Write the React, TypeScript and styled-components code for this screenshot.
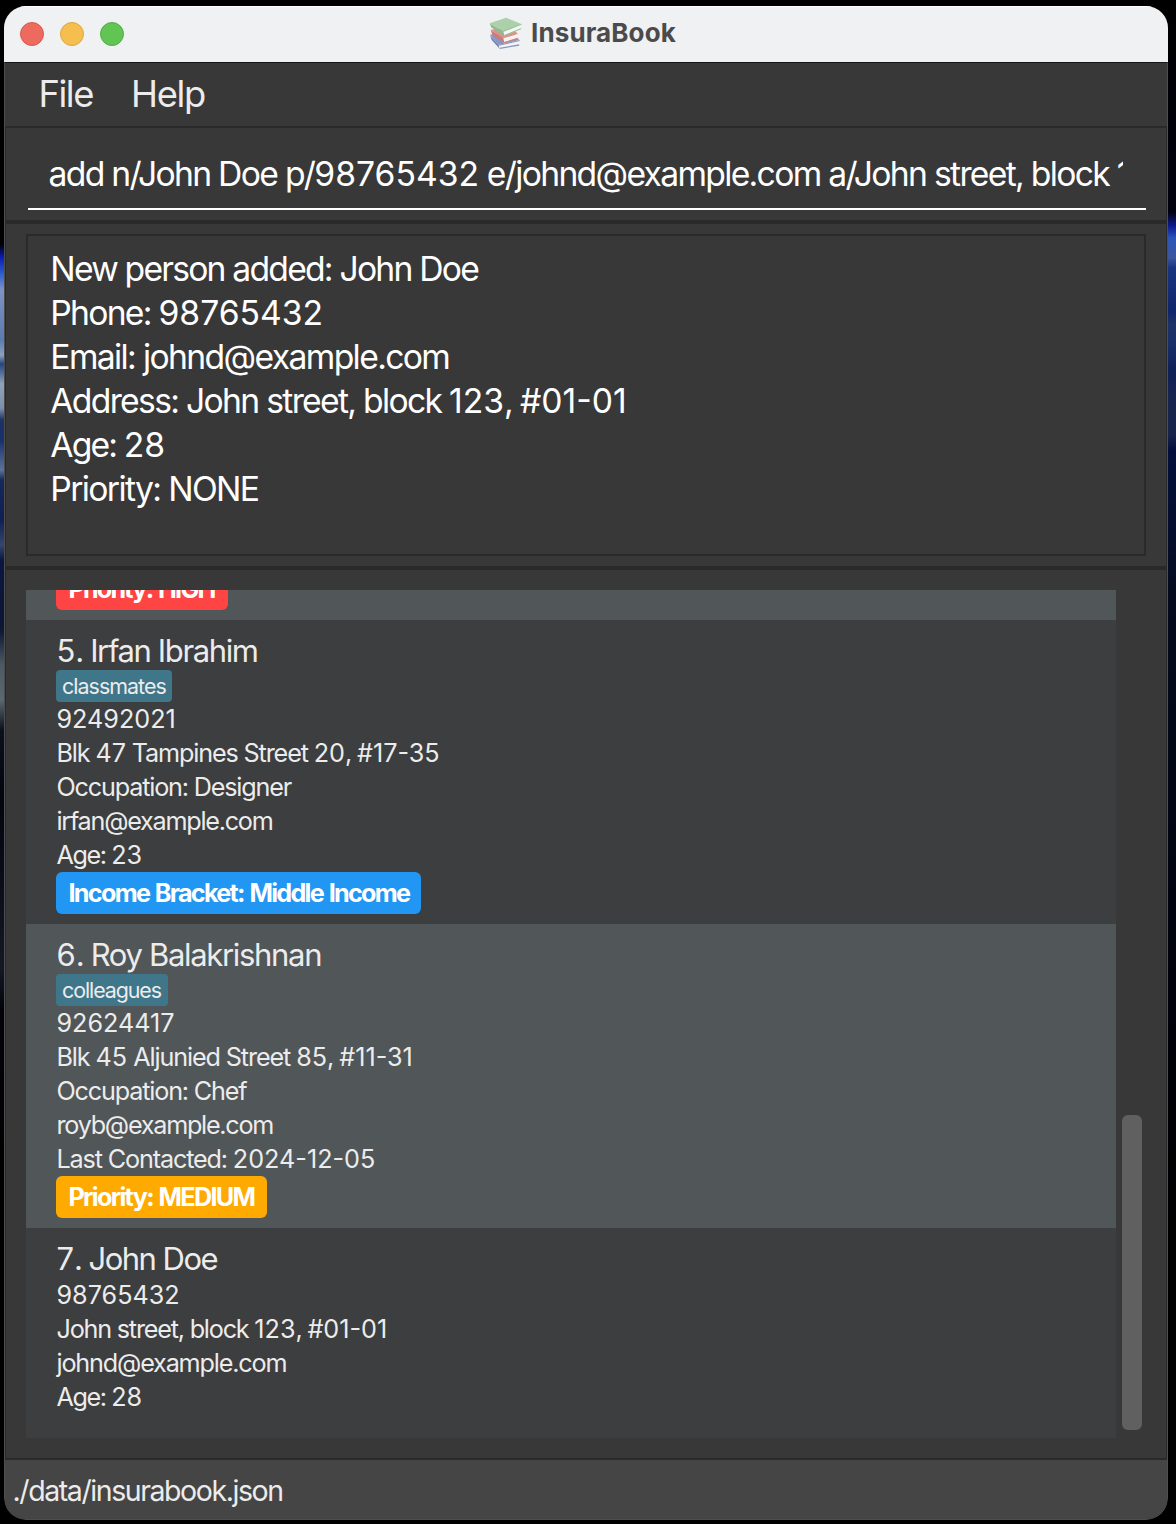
import React from "react";
import styled, { createGlobalStyle } from "styled-components";

const GlobalStyle = createGlobalStyle`
  * { box-sizing: border-box; }
  body {
    margin: 0;
    background: #000;
    font-family: Inter, "Liberation Sans", sans-serif;
    color: #ececec;
  }
`;

const Desktop = styled.div`
  width: 1176px;
  height: 1524px;
  padding: 6px 8px 4px 4px;
  overflow: hidden;
  background:
    linear-gradient(
      to bottom,
      #000 0, #000 244px, #0a1cb0 257px, #2c5fd0 274px, #7f92c4 290px,
      #5b7bb0 340px, #8fa0bd 355px, #23467f 364px, #8fa3b8 384px,
      #7c90ae 408px, #1c3262 420px, #17306e 440px, #5c7398 470px,
      #16275a 480px, #0f1f55 520px, #33476e 545px, #0a1640 560px,
      #0c1734 630px, #4b5a63 665px, #5a6870 700px, #0b101c 730px,
      #02040e 800px, #141824 970px, #02030a 1010px, #000 1200px
    ) 0 0 / 4px 100% no-repeat,
    linear-gradient(
      to bottom,
      #000 0, #01020f 212px, #0c1b92 226px, #2b55b8 238px, #3c569c 258px,
      #1a3580 268px, #10256a 312px, #1d3267 324px, #182f68 345px,
      #0f2058 370px, #16254e 400px, #18244a 435px, #04103c 450px,
      #040d2a 540px, #050b1c 600px, #030818 720px, #000006 1100px, #000 1250px
    ) 100% 0 / 8px 100% no-repeat,
    #000;
`;

const Window = styled.div`
  display: flex;
  flex-direction: column;
  height: 1514px;
  border-radius: 22px;
  overflow: hidden;
`;

const TitleBar = styled.header`
  display: flex;
  align-items: center;
  flex: 0 0 56px;
  padding: 0 0 1px 16px;
  background: #f0f1f3;
  border-top: 1px solid #fff;
`;

const Lights = styled.div`
  display: flex;
  gap: 16px;
`;

const Light = styled.span<{ $fill: string; $edge: string }>`
  width: 24px;
  height: 24px;
  border-radius: 50%;
  background: ${(p) => p.$fill};
  border: 1px solid ${(p) => p.$edge};
`;

const Title = styled.h1`
  display: flex;
  align-items: center;
  gap: 9px;
  margin: -2px 0 0 365px;
  font-size: 26px;
  line-height: 34px;
  font-weight: 700;
  letter-spacing: 0.12px;
  color: #4b4b4b;
`;

const Body = styled.div`
  display: flex;
  flex-direction: column;
  flex: 1;
  background: #383838;
  border: 1px solid #4e4e4e;
  border-top-color: #161616;
  border-radius: 0 0 22px 22px;
  overflow: hidden;
`;

const MenuBar = styled.nav`
  display: flex;
  flex: 0 0 63px;
  gap: 38px;
  padding: 9px 0 0 33.4px;
  font-size: 36.3px;
  line-height: 44px;
`;

const Panes = styled.main`
  display: flex;
  flex-direction: column;
  flex: 1;
  border: solid #2a2a2a;
  border-width: 2px 1px;
`;

const CommandPane = styled.section`
  flex: 0 0 92px;
  padding: 0 20px 10px 22px;
`;

const CommandField = styled.div`
  height: 82px;
  padding: 24px 23px 0 20.5px;
  border-bottom: 2px solid #fff;
  font-size: 33.7px;
  line-height: 44px;
  color: #fff;
`;

const CommandText = styled.div`
  overflow: hidden;
  white-space: nowrap;
`;

const ResultPane = styled.section`
  flex: 0 0 350px;
  padding: 10px 20px;
  border: solid #2a2a2a;
  border-width: 4px 0;
`;

const ResultBox = styled.div`
  height: 322px;
  padding: 11px 22px 0 22.3px;
  border: 2px solid #2a2a2a;
  font-size: 33.7px;
  line-height: 44px;
  color: #fff;
`;

const ListPane = styled.section`
  display: flex;
  flex: 1;
  gap: 6px;
  padding: 20px 24px 20px 20px;
`;

const PersonList = styled.ol`
  display: flex;
  flex-direction: column;
  justify-content: flex-end;
  width: 1090px;
  height: 848px;
  margin: 0;
  padding: 0;
  overflow: hidden;
  list-style: none;
`;

const PersonCell = styled.li<{ $alt: boolean; $height: number }>`
  display: flex;
  flex-direction: column;
  align-items: flex-start;
  flex: 0 0 ${(p) => p.$height}px;
  padding: 10px 10px 10px 30px;
  background: ${(p) => (p.$alt ? "#515658" : "#3c3e3f")};
`;

const Line = styled.div<{ $tracking: number }>`
  white-space: pre;
  letter-spacing: ${(p) => p.$tracking}px;
`;

const Digits = styled.span`
  letter-spacing: 0;
`;

const Name = styled.div`
  height: 40px;
  padding-left: 0.4px;
  font-size: 31px;
  line-height: 42px;
`;

const Detail = styled.div`
  padding-left: 0.5px;
  font-size: 25.2px;
  line-height: 34px;
`;

const Tag = styled.div<{ $width: number }>`
  width: ${(p) => p.$width}px;
  height: 32px;
  padding-left: 6px;
  border-radius: 4px;
  background: #3f768a;
  font-size: 21.4px;
  line-height: 33px;
`;

const Badge = styled.div<{ $color: string; $width: number }>`
  flex: none;
  width: ${(p) => p.$width}px;
  height: 42px;
  padding-left: 12.5px;
  border-radius: 6px;
  background: ${(p) => p.$color};
  color: #fff;
  font-size: 25.2px;
  font-weight: 700;
  line-height: 42px;
  word-spacing: 1.4px;
`;

const ScrollTrack = styled.div`
  display: flex;
  align-items: flex-end;
  width: 20px;
  padding-bottom: 8px;
`;

const ScrollThumb = styled.div`
  width: 20px;
  height: 315px;
  border-radius: 6px;
  background: #606060;
`;

const StatusBar = styled.footer`
  flex: 0 0 60px;
  padding-left: 7.5px;
  background: #454545;
  font-size: 28.5px;
  line-height: 61px;
`;

type Txt = [text: string, tracking: number];

function Tracked({ value: [text, tracking] }: { value: Txt }) {
  return (
    <Line $tracking={tracking}>
      {text.split(/(#?\d[\d-]*)/).map((part, i) => (i % 2 ? <Digits key={i}>{part}</Digits> : part))}
    </Line>
  );
}

function BooksIcon() {
  return (
    <svg width="33" height="33" viewBox="15 15 99 99">
      <path d="M18 70 44 98 47 110 23 84Z" fill="#7683b3" />
      <path d="M18 68 78 58 106 84 44 99Z" fill="#8b97c2" />
      <path d="M44 99 106 85 105 99 47 109Z" fill="#f4f4f6" />
      <path d="M44 98 107 84 107 87 45 101Z M47 107 105 97 106 101 47 111Z" fill="#8a96bd" />
      <path d="M20 54 57 78 61 93 25 68Z" fill="#cc7b77" />
      <path d="M20 53 80 45 102 66 58 80Z" fill="#dc9189" />
      <path d="M58 79 102 66 100 79 61 91Z" fill="#f6f2f1" />
      <path d="M61 90 101 77 102 81 61 94Z" fill="#cf827d" />
      <path d="M17 34 57 57 60 73 22 46Z" fill="#8fba92" />
      <path d="M17 34 66 17 112 36 58 58Z" fill="#acd0ab" />
      <path d="M58 58 112 37 111 49 61 70Z" fill="#f7f8f6" />
      <path d="M57 56 112 35 113 38 58 60Z M61 69 111 48 112 51 61 73Z" fill="#9cc49f" />
    </svg>
  );
}

type Person = {
  height: number;
  name?: Txt;
  tag?: { text: Txt; width: number };
  details: Txt[];
  badge?: { text: Txt; color: string; width: number };
};

const people: Person[] = [
  { height: 52, details: [], badge: { text: ["Priority: HIGH", -1.75], color: "#ff4444", width: 172 } },
  {
    height: 304,
    name: ["5. Irfan Ibrahim", -1.37],
    tag: { text: ["classmates", -0.95], width: 116 },
    details: [
      ["92492021", 0],
      ["Blk 47 Tampines Street 20, #17-35", -1.15],
      ["Occupation: Designer", -1.18],
      ["irfan@example.com", -1.26],
      ["Age: 23", -1.42],
    ],
    badge: { text: ["Income Bracket: Middle Income", -1.72], color: "#2196f3", width: 365 },
  },
  {
    height: 304,
    name: ["6. Roy Balakrishnan", -1.32],
    tag: { text: ["colleagues", -1.07], width: 112 },
    details: [
      ["92624417", 0],
      ["Blk 45 Aljunied Street 85, #11-31", -1.11],
      ["Occupation: Chef", -1.17],
      ["royb@example.com", -1.26],
      ["Last Contacted: 2024-12-05", -1.15],
    ],
    badge: { text: ["Priority: MEDIUM", -1.7], color: "#ffaa00", width: 211 },
  },
  {
    height: 210,
    name: ["7. John Doe", -1.52],
    details: [
      ["98765432", 0],
      ["John street, block 123, #01-01", -1.21],
      ["johnd@example.com", -1.18],
      ["Age: 28", -1.42],
    ],
  },
];

const result: Txt[] = [
  ["New person added: John Doe", -1.79],
  ["Phone: 98765432", -1.75],
  ["Email: johnd@example.com", -1.64],
  ["Address: John street, block 123, #01-01", -1.7],
  ["Age: 28", -1.88],
  ["Priority: NONE", -1.64],
];

export default function App() {
  return (
    <Desktop>
      <GlobalStyle />
      <Window>
        <TitleBar>
          <Lights>
            <Light $fill="#ed6a5f" $edge="#d9594e" />
            <Light $fill="#f5bf4f" $edge="#dba63f" />
            <Light $fill="#61c554" $edge="#4fae42" />
          </Lights>
          <Title>
            <BooksIcon />
            InsuraBook
          </Title>
        </TitleBar>
        <Body>
          <MenuBar>
            <Tracked value={["File", -1.4]} />
            <Tracked value={["Help", -1.31]} />
          </MenuBar>
          <Panes>
            <CommandPane>
              <CommandField>
                <CommandText>
                  <Tracked value={["add n/John Doe p/98765432 e/johnd@example.com a/John street, block 1", -1.7]} />
                </CommandText>
              </CommandField>
            </CommandPane>
            <ResultPane>
              <ResultBox>
                {result.map((line) => (
                  <Tracked key={line[0]} value={line} />
                ))}
              </ResultBox>
            </ResultPane>
            <ListPane>
              <PersonList>
                {people.map((p, i) => (
                  <PersonCell key={i} $alt={i % 2 === 0} $height={p.height}>
                    {p.name && <Name><Tracked value={p.name} /></Name>}
                    {p.tag && <Tag $width={p.tag.width}><Tracked value={p.tag.text} /></Tag>}
                    {p.details.map((d) => (
                      <Detail key={d[0]}><Tracked value={d} /></Detail>
                    ))}
                    {p.badge && (
                      <Badge $color={p.badge.color} $width={p.badge.width}>
                        <Tracked value={p.badge.text} />
                      </Badge>
                    )}
                  </PersonCell>
                ))}
              </PersonList>
              <ScrollTrack>
                <ScrollThumb />
              </ScrollTrack>
            </ListPane>
          </Panes>
          <StatusBar>
            <Tracked value={["./data/insurabook.json", -1.42]} />
          </StatusBar>
        </Body>
      </Window>
    </Desktop>
  );
}
